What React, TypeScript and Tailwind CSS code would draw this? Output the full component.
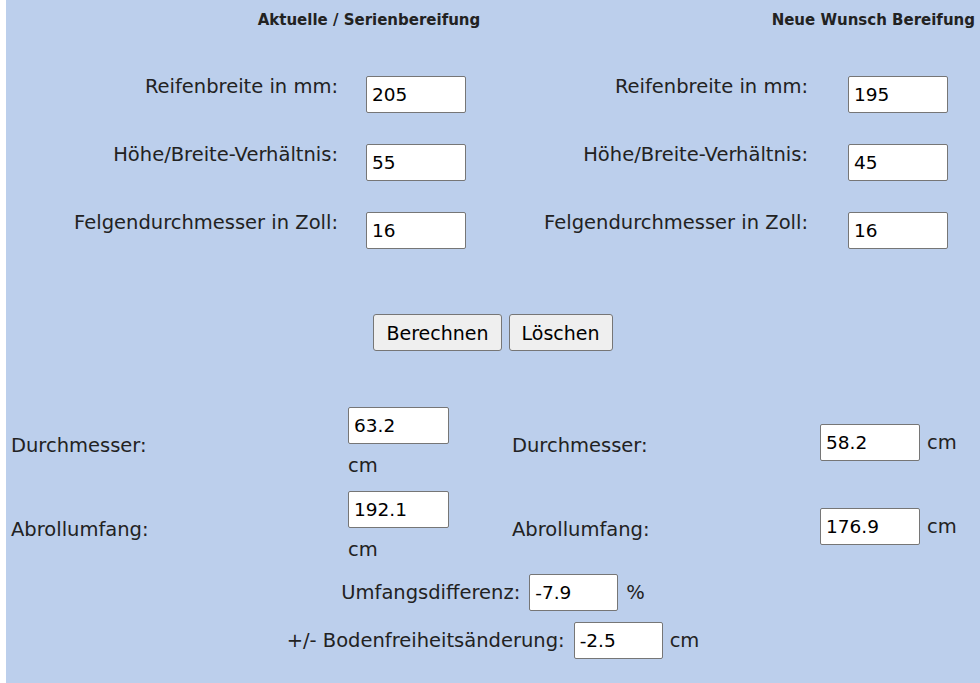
import React from "react";

const font = { fontFamily: '"DejaVu Sans", Verdana, sans-serif' };

function Field({ value, w = "w-[100px]" }: { value: string; w?: string }) {
  return (
    <input
      readOnly
      value={value}
      className={`${w} h-[37px] border border-[#767676] rounded-[2px] bg-white px-[5px] text-[18.5px] text-black outline-none`}
      style={font}
    />
  );
}

function TopRow({ l1, v1, l2, v2 }: { l1: string; v1: string; l2: string; v2: string }) {
  return (
    <div className="flex items-start h-[68px]">
      <div className="w-[332px] text-right">{l1}</div>
      <div className="ml-[28px]">
        <Field value={v1} />
      </div>
      <div className="w-[342px] text-right">{l2}</div>
      <div className="ml-[40px]">
        <Field value={v2} />
      </div>
    </div>
  );
}

function ResultRow({ label, left, right }: { label: string; left: string; right: string }) {
  return (
    <div className="flex items-center h-[84px]">
      <div className="w-[342px] pl-[5px] pt-[8px]">{label}</div>
      <div className="w-[164px] flex flex-col items-start gap-[11px]">
        <Field value={left} w="w-[101px]" />
        <span className="leading-[22px]">cm</span>
      </div>
      <div className="w-[308px] pt-[8px]">{label}</div>
      <div className="flex items-baseline gap-[7px]">
        <Field value={right} w="w-[100px]" />
        <span>cm</span>
      </div>
    </div>
  );
}

export default function App() {
  return (
    <div className="flex w-full h-[683px] bg-white overflow-hidden" style={font}>
      <div className="ml-[6px] flex-1 bg-[#bccfec] text-[#222] text-[19.5px] leading-[22px]">
        <div className="flex items-center h-[40px] text-[15px] font-bold text-[#222] whitespace-nowrap">
          <div className="w-[520px] shrink-0 pl-[206px] text-center">Aktuelle / Serienbereifung</div>
          <div className="flex-1 text-right pr-[5px]">Neue Wunsch Bereifung</div>
        </div>
        <div className="h-[36px]" />
        <TopRow l1="Reifenbreite in mm:" v1="205" l2="Reifenbreite in mm:" v2="195" />
        <TopRow l1="Höhe/Breite-Verhältnis:" v1="55" l2="Höhe/Breite-Verhältnis:" v2="45" />
        <TopRow l1="Felgendurchmesser in Zoll:" v1="16" l2="Felgendurchmesser in Zoll:" v2="16" />
        <div className="h-[34px]" />
        <div className="flex justify-center gap-[7px]">
          <button className="h-[37px] px-[12px] bg-[#efefef] border border-[#767676] rounded-[3px] text-black text-[19px]" style={font}>
            Berechnen
          </button>
          <button className="h-[37px] px-[12px] bg-[#efefef] border border-[#767676] rounded-[3px] text-black text-[19px]" style={font}>
            Löschen
          </button>
        </div>
        <div className="h-[49px]" />
        <ResultRow label="Durchmesser:" left="63.2" right="58.2" />
        <ResultRow label="Abrollumfang:" left="192.1" right="176.9" />
        <div className="flex flex-col items-center gap-[11px] mt-[6px]">
          <div className="flex items-baseline">
            <span>Umfangsdifferenz:</span>
            <span className="ml-[9px]"><Field value="-7.9" w="w-[89px]" /></span>
            <span className="ml-[8px]">%</span>
          </div>
          <div className="flex items-baseline">
            <span>+/- Bodenfreiheitsänderung:</span>
            <span className="ml-[9px]"><Field value="-2.5" w="w-[89px]" /></span>
            <span className="ml-[7px]">cm</span>
          </div>
        </div>
      </div>
    </div>
  );
}
